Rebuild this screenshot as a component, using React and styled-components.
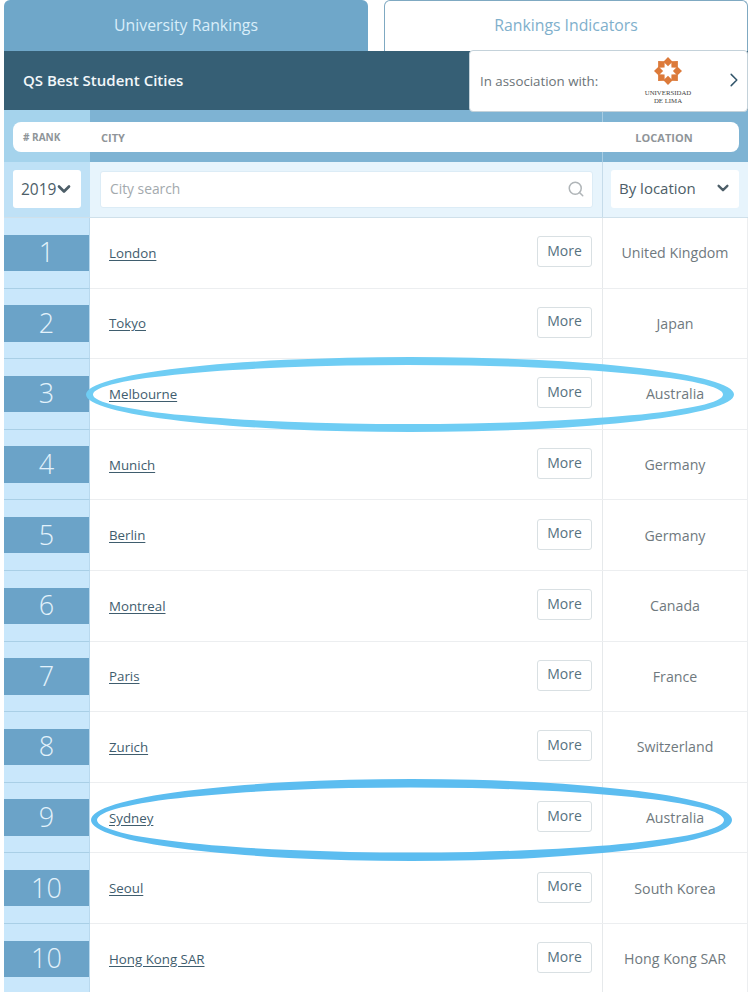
import React from "react";
import styled, { createGlobalStyle } from "styled-components";
import { HiOutlineChevronRight, HiOutlineChevronDown } from "react-icons/hi2";
import { FiSearch } from "react-icons/fi";

const rows = [
  ["1", "London", "United Kingdom"],
  ["2", "Tokyo", "Japan"],
  ["3", "Melbourne", "Australia"],
  ["4", "Munich", "Germany"],
  ["5", "Berlin", "Germany"],
  ["6", "Montreal", "Canada"],
  ["7", "Paris", "France"],
  ["8", "Zurich", "Switzerland"],
  ["9", "Sydney", "Australia"],
  ["10", "Seoul", "South Korea"],
  ["10", "Hong Kong SAR", "Hong Kong SAR"],
];

// outer and inner ellipse as one ring, so the stroke can be thicker top and bottom
const ring = (cx, cy, rx, ry) =>
  `M${cx - rx} ${cy} A${rx} ${ry} 0 1 0 ${cx + rx} ${cy} A${rx} ${ry} 0 1 0 ${cx - rx} ${cy} Z`;

const App = () => {
  return (
    <Page>
      <GlobalStyle />
      <Tabs>
        <ActiveTab>University Rankings</ActiveTab>
        <OutlineTab>Rankings Indicators</OutlineTab>
      </Tabs>
      <TitleBar>
        <Title>QS Best Student Cities</Title>
        <Sponsor>
          <SponsorLabel>In association with:</SponsorLabel>
          <Logo>
            <svg width="28" height="28" viewBox="-15 -15 30 30">
              {[0, 45, 90, 135, 180, 225, 270, 315].map((deg) => (
                <path
                  key={deg}
                  transform={`rotate(${deg})`}
                  d="M0 -15 L4.9 -10 L0 -5.2 L-4.9 -10 Z"
                  fill="#dc7a3a"
                />
              ))}
            </svg>
            <LogoText>UNIVERSIDAD<br />DE LIMA</LogoText>
          </Logo>
          <SponsorArrow><HiOutlineChevronRight size={18} strokeWidth={2} /></SponsorArrow>
        </Sponsor>
      </TitleBar>
      <HeadBand>
        <HeadPill>
          <RankHead># RANK</RankHead>
          <CityHead>CITY</CityHead>
          <LocationHead>LOCATION</LocationHead>
        </HeadPill>
      </HeadBand>
      <FilterRow>
        <RankFilter>
          <YearSelect>2019<HiOutlineChevronDown size={16} strokeWidth={4} /></YearSelect>
        </RankFilter>
        <SearchCell>
          <SearchBox>
            City search
            <FiSearch size={18} color="#b0b5b8" />
          </SearchBox>
        </SearchCell>
        <LocationFilter>
          <LocationSelect>By location<HiOutlineChevronDown size={14} strokeWidth={4} /></LocationSelect>
        </LocationFilter>
      </FilterRow>
      {rows.map(([rank, city, location]) => (
        <Row key={city}>
          <RankCell><RankBadge>{rank}</RankBadge></RankCell>
          <CityCell>
            <CityLink>{city}</CityLink>
            <MoreButton>More</MoreButton>
          </CityCell>
          <LocationCell>{location}</LocationCell>
        </Row>
      ))}
      <MarkerOne viewBox="0 0 648 75">
        <path
          fillRule="evenodd"
          fill="#6fcdf4"
          d={ring(324, 37.5, 324, 37.5) + ring(322, 37.5, 315, 29.5)}
        />
      </MarkerOne>
      <MarkerTwo viewBox="0 0 641 82">
        <path
          fillRule="evenodd"
          fill="#5cbdf0"
          d={ring(320.5, 41, 320.5, 41) + ring(319.5, 41, 313.5, 32.5)}
        />
      </MarkerTwo>
    </Page>
  );
};

const GlobalStyle = createGlobalStyle`
  html, body {
    margin: 0;
    padding: 0;
    background: #fff;
  }
`;

const Page = styled.div`
  position: relative;
  width: 750px;
  height: 992px;
  overflow: hidden;
  padding: 0 2px 0 4px;
  box-sizing: border-box;
  font-family: "Open Sans", "Liberation Sans", sans-serif;
  background: #fff;
`;

const Tabs = styled.div`
  display: flex;
  justify-content: space-between;
  height: 51px;
`;

const ActiveTab = styled.div`
  width: 364px;
  display: flex;
  align-items: center;
  justify-content: center;
  padding-bottom: 1px;
  box-sizing: border-box;
  background: #6fa7c9;
  color: #d9eefa;
  font-size: 15.8px;
  border-radius: 6px 6px 0 0;
`;

const OutlineTab = styled(ActiveTab)`
  padding-bottom: 2px;
  background: #fff;
  color: #7fb0cc;
  border: 1px solid #7fa9c2;
  border-bottom: 0;
`;

const TitleBar = styled.div`
  display: flex;
  justify-content: space-between;
  height: 59px;
  background: #365f75;
`;

const Title = styled.div`
  padding: 19px 0 0 19px;
  color: #f2f7fa;
  font-size: 15px;
  font-weight: 600;
`;

const Sponsor = styled.div`
  position: relative;
  z-index: 1;
  width: 279px;
  height: 62px;
  margin-top: -1px;
  padding: 0 10px;
  box-sizing: border-box;
  display: flex;
  align-items: center;
  background: #fff;
  border: 1px solid #c4d2da;
  border-radius: 4px;
`;

const SponsorLabel = styled.div`
  width: 163px;
  color: #6c7478;
  font-size: 13.3px;
`;

const Logo = styled.div`
  width: 50px;
  align-self: flex-start;
  display: flex;
  flex-direction: column;
  align-items: center;
  margin-top: 6px;
`;

const LogoText = styled.div`
  font-family: "Liberation Serif", serif;
  font-size: 6.8px;
  line-height: 7.5px;
  text-align: center;
  color: #444;
  margin-top: 4px;
`;

const SponsorArrow = styled.div`
  display: flex;
  margin: -3px -6px 0 auto;
  color: #33566b;
`;

const HeadBand = styled.div`
  height: 52px;
  padding-top: 12px;
  box-sizing: border-box;
  background: linear-gradient(
    to right,
    #a5d3ec 86px,
    #7eb3d3 86px,
    #7eb3d3 598px,
    #a9cde2 598px,
    #a9cde2 599px,
    #7eb3d3 599px
  );
`;

const HeadPill = styled.div`
  width: 726px;
  height: 30px;
  margin-left: 9px;
  display: grid;
  grid-template-columns: 77px 1fr 137px;
  align-items: center;
  background: #fff;
  border-radius: 8px;
  color: #8f9599;
  font-size: 11px;
  font-weight: 700;
`;

const RankHead = styled.div`
  padding-left: 10px;
  font-size: 10px;
`;

const CityHead = styled.div`
  padding-left: 11px;
`;

const LocationHead = styled.div`
  padding-right: 13px;
  text-align: center;
`;

const FilterRow = styled.div`
  display: grid;
  grid-template-columns: 86px 1fr 145px;
  height: 56px;
  border-bottom: 1px solid #cfe0ea;
  box-sizing: border-box;
  background: #e7f4fc;
`;

const RankFilter = styled.div`
  padding: 8px 9px 0;
  background: #bfe1f6;
`;

const YearSelect = styled.div`
  width: 68px;
  height: 38px;
  padding-left: 8px;
  box-sizing: border-box;
  display: flex;
  align-items: center;
  background: #fff;
  border-radius: 3px;
  color: #4d5e68;
  font-size: 15.5px;
`;

const SearchCell = styled.div`
  padding: 9px 9px 0 10px;
  border-right: 1px solid #c6dcea;
`;

const SearchBox = styled.div`
  height: 37px;
  padding: 0 7px 2px 9px;
  display: flex;
  align-items: center;
  justify-content: space-between;
  background: #fff;
  border: 1px solid #dcecf6;
  border-radius: 3px;
  box-sizing: border-box;
  color: #a3a9ad;
  font-size: 13.8px;
`;

const LocationFilter = styled.div`
  padding: 8px 9px 0 8px;
`;

const LocationSelect = styled.div`
  height: 38px;
  padding: 0 9px 2px 8px;
  box-sizing: border-box;
  display: flex;
  align-items: center;
  justify-content: space-between;
  background: #fff;
  border-radius: 3px;
  color: #4d5e68;
  font-size: 15px;
`;

const Row = styled.div`
  display: grid;
  grid-template-columns: 86px 1fr 144px;
  height: 70.6px;
  box-sizing: border-box;
  border-bottom: 1px solid #eceef0;
  border-right: 1px solid #eceef0;
`;

const RankCell = styled.div`
  height: calc(100% + 1px);
  padding-top: 16.6px;
  background: #c9e7fb;
  border-right: 1px solid #b9d9ee;
  border-bottom: 1px solid #a9cfe6;
  box-sizing: border-box;
`;

const RankBadge = styled.div`
  height: 36.4px;
  padding-bottom: 2px;
  box-sizing: border-box;
  display: flex;
  align-items: center;
  justify-content: center;
  background: #6ba3c8;
  color: #e3f2fb;
  font-size: 27px;
  font-weight: 300;
`;

const CityCell = styled.div`
  display: flex;
  align-items: center;
  justify-content: space-between;
  padding: 0 10px 0 19px;
  border-right: 1px solid #e6e9eb;
`;

const CityLink = styled.a`
  color: #3f5d6e;
  font-size: 13.3px;
  text-decoration: underline;
  text-underline-offset: 2px;
`;

const MoreButton = styled.div`
  width: 55px;
  height: 31px;
  margin-top: -2px;
  padding-bottom: 3px;
  box-sizing: border-box;
  display: flex;
  align-items: center;
  justify-content: center;
  border: 1px solid #d9e0e3;
  border-radius: 3px;
  background: #fff;
  color: #56727f;
  font-size: 14px;
`;

const LocationCell = styled.div`
  display: flex;
  align-items: center;
  justify-content: center;
  color: #6f797e;
  font-size: 14.2px;
`;

const MarkerOne = styled.svg`
  position: absolute;
  left: 86px;
  top: 357px;
  width: 648px;
  height: 75px;
  pointer-events: none;
`;

const MarkerTwo = styled.svg`
  position: absolute;
  left: 91px;
  top: 779px;
  width: 641px;
  height: 82px;
  pointer-events: none;
`;

export default App;
